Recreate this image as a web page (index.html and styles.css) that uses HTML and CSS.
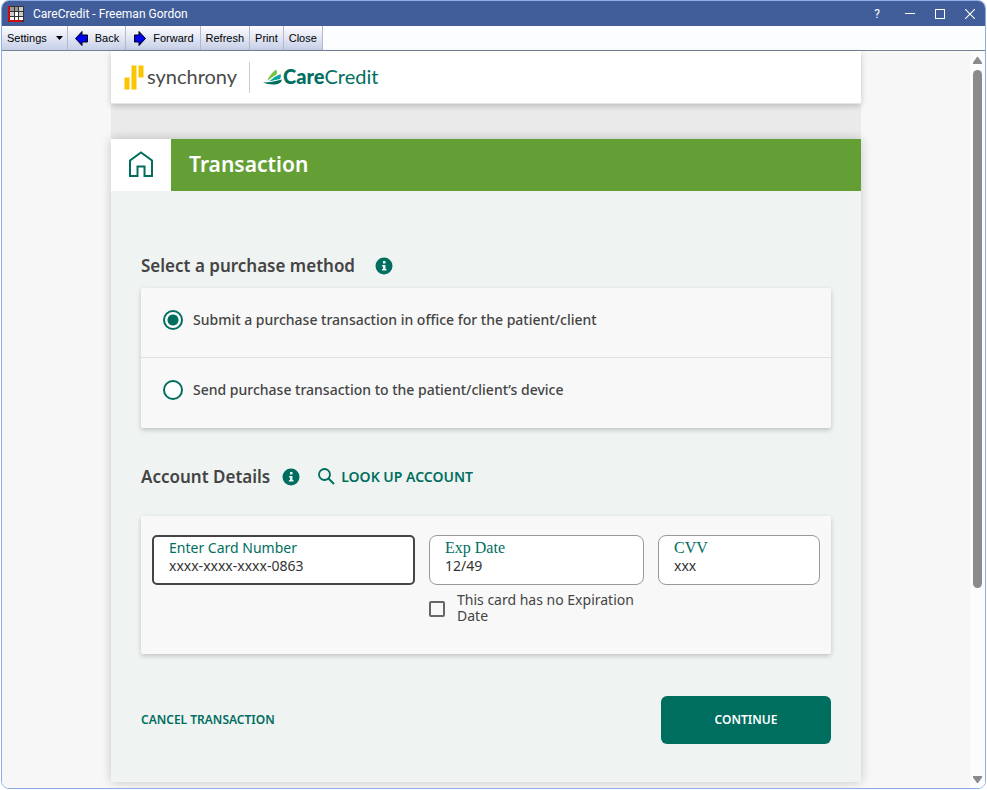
FILE: index.html
```html
<!DOCTYPE html>
<html lang="en">
    <head>
        <meta charset="utf-8">
        <title>CareCredit - Freeman Gordon</title>
        <link rel="stylesheet" href="styles.css">
    </head>
    <body>
        <div class="window">
            <div class="titlebar">
                <svg class="app-icon" width="16" height="16" viewBox="0 0 16 16">
                    <rect width="16" height="16" fill="#333"/>
                    <path d="M2 1h4v4h-4zM7 1h3v4h-3z" fill="#999"/>
                    <path d="M11 1h4v4h-4zM2 6h4v4h-4zM11 6h4v4h-4z" fill="#ccc"/>
                    <path d="M7 6h3v4h-3zM2 11h4v3h-4zM7 11h3v3h-3zM11 11h4v3h-4z" fill="#fff"/>
                    <path d="M1 0v15H14" fill="none" stroke="#f00" stroke-width="1.500"/>
                </svg>
                <span class="caption">CareCredit - Freeman Gordon</span>
                <button class="winbtn help" aria-label="Help">?</button>
                <button class="winbtn" aria-label="Minimize">
                    <svg width="10" height="10" viewBox="0 0 10 10"><path d="M0 4.500H10" stroke="#fff"/></svg>
                </button>
                <button class="winbtn" aria-label="Maximize">
                    <svg width="10" height="10" viewBox="0 0 10 10"><rect x="0.500" y="0.500" width="9" height="9" fill="none" stroke="#fff"/></svg>
                </button>
                <button class="winbtn" aria-label="Close window">
                    <svg width="10" height="10" viewBox="0 0 10 10"><path d="M0 0L10 10M10 0L0 10" stroke="#fff" stroke-width="1.100"/></svg>
                </button>
            </div>
            <div class="toolbar">
                <button class="tool">Settings
                    <svg class="caret" width="7" height="4" viewBox="0 0 7 4"><path d="M0 0H7L3.500 4z"/></svg>
                </button>
                <button class="tool tool-icon">
                    <svg width="14" height="15" viewBox="0 0 14 15"><path d="M7 0.500V4H12.500V11H7V14.500L0.500 7.500z" fill="#0000f0" stroke="#000"/></svg>
                    Back
                </button>
                <button class="tool tool-icon">
                    <svg width="14" height="15" viewBox="0 0 14 15"><path d="M6 0.500V4H1.500V11H6V14.500L12.500 7.500z" fill="#0000f0" stroke="#000"/></svg>
                    Forward
                </button>
                <button class="tool">Refresh</button>
                <button class="tool">Print</button>
                <button class="tool">Close</button>
            </div>
            <div class="view">
                <div class="page">
                    <header class="brand">
                        <svg width="20" height="25" viewBox="0 0 20 25">
                            <path d="M0.500 12.500h5v12h-5zM7.500 0.500h5v24h-5zM14.500 0.500h5v12h-5z" fill="#fbc600"/>
                        </svg>
                        <span class="synchrony">synchrony</span>
                        <span class="divider"></span>
                        <svg width="20" height="17" viewBox="0 0 20 17">
                            <path d="M4 12Q7 5 13 0.500Q15 3 13.500 5.500Q9 8 4 12z" fill="#7ac143"/>
                            <path d="M6 12.500Q11 7.500 17.500 5Q18.500 8 17 10Q11 11 6 12.500z" fill="#00a79d"/>
                            <path d="M0 13.500Q9 13.500 19 10.500Q18 15 12 15.500Q5 16 0 13.500z" fill="#006e5f"/>
                        </svg>
                        <span class="care"><b>Care</b>Credit</span>
                    </header>
                    <main class="sheet">
                        <div class="heading">
                            <a href="#" class="home" aria-label="Home">
                                <svg width="26" height="26" viewBox="0 0 26 26"><path d="M2 25V9.500L13 1.500L24 9.500V25H16.500V15.500H9.500V25z" fill="none" stroke="#006e5f" stroke-width="2"/></svg>
                            </a>
                            <h1>Transaction</h1>
                        </div>
                        <form class="body">
                            <div class="section">
                                <h2>Select a purchase method</h2>
                                <svg class="info info-wide" width="18" height="18" viewBox="0 0 18 18"><circle cx="9" cy="9" r="8.500" fill="#006e5f"/><path d="M8 4h2.500v2.500h-2.500zM7 8h3.500v4h1v1.500h-4.500v-1.500h1v-2.500h-1z" fill="#e8f3f0"/></svg>
                            </div>
                            <div class="card">
                                <label class="option"><input type="radio" name="method" checked><span>Submit a purchase transaction in office for the patient/client</span></label>
                                <label class="option"><input type="radio" name="method"><span>Send purchase transaction to the patient/client’s device</span></label>
                            </div>
                            <div class="section section-account">
                                <h2>Account Details</h2>
                                <svg class="info" width="18" height="18" viewBox="0 0 18 18"><circle cx="9" cy="9" r="8.500" fill="#006e5f"/><path d="M8 4h2.500v2.500h-2.500zM7 8h3.500v4h1v1.500h-4.500v-1.500h1v-2.500h-1z" fill="#e8f3f0"/></svg>
                                <a href="#" class="lookup">
                                    <svg width="17" height="17" viewBox="0 0 17 17"><circle cx="6.500" cy="6.500" r="5.500" fill="none" stroke="#006e5f" stroke-width="1.800"/><path d="M10.500 10.500L16 16" stroke="#006e5f" stroke-width="2"/></svg>
                                    LOOK UP ACCOUNT
                                </a>
                            </div>
                            <div class="card details">
                                <div class="field focused">
                                    <label for="card">Enter Card Number</label>
                                    <input type="text" id="card" value="xxxx-xxxx-xxxx-0863">
                                </div>
                                <div>
                                    <div class="field serif">
                                        <label for="exp">Exp Date</label>
                                        <input type="text" id="exp" value="12/49">
                                    </div>
                                    <label class="noexp"><input type="checkbox"><span>This card has no Expiration Date</span></label>
                                </div>
                                <div class="field serif">
                                    <label for="cvv">CVV</label>
                                    <input type="text" id="cvv" value="xxx">
                                </div>
                            </div>
                            <div class="actions">
                                <a href="#" class="cancel">CANCEL TRANSACTION</a>
                                <button type="button" class="continue">CONTINUE</button>
                            </div>
                        </form>
                    </main>
                </div>
                <div class="scrollbar">
                    <svg width="9" height="7" viewBox="0 0 9 7"><path d="M4 0h1L9 5.500V7H0V5.500z" fill="#8b8b8b"/></svg>
                    <div class="track"><div class="thumb"></div></div>
                    <svg width="9" height="7" viewBox="0 0 9 7"><path d="M4 7h1L9 1.500V0H0V1.500z" fill="#8b8b8b"/></svg>
                </div>
            </div>
        </div>
    </body>
</html>
```
FILE: styles.css
```css
*{box-sizing: border-box;}
body{margin: 0; background-color: #fff; color: #444; font-family: "Noto Sans", sans-serif;}
h1, h2{margin: 0; font-weight: 600;}
a{color: #006e5f; text-decoration: none;}
button{font-family: inherit; border: 0; padding: 0;}
svg{display: block; flex: none;}

.window{height: calc(100vh - 1px); margin: 0 1px; border: 1px solid #8fade6; border-radius: 8px; overflow: hidden; display: flex; flex-direction: column;}
.titlebar{height: 25px; flex: none; display: flex; align-items: center; padding-left: 6px; background-color: #425e9a; color: #fff;}
.caption{flex: 1; margin-left: 9px; font-family: Roboto, sans-serif; font-size: 12px;}
.winbtn{width: 30px; height: 24px; background: none; color: #fff; display: flex; align-items: center; justify-content: center; font-family: Roboto, sans-serif; font-size: 12px;}
.help{width: 36px;}
.toolbar{height: 25px; flex: none; display: flex; background-color: #fcfdff; border-bottom: 1px solid #748296;}
.tool{height: 24px; display: flex; align-items: center; padding: 0 4px 0 5px; border-right: 1px solid #b4bac8; background: linear-gradient(#fdfdff, #c6cfe8); color: #000; font-family: "Liberation Sans", Arial, sans-serif; font-size: 11px;}
.tool + .tool{padding: 0 5px;}
.tool + .tool-icon{gap: 6px; padding: 0 6px 0 7px;}
.caret{margin-left: 9px;}

.view{flex: 1; min-height: 0; display: flex; background-color: #f7f7f7;}
.page{width: 100%; max-width: 750px; margin: 0 auto; display: flex; flex-direction: column; background: linear-gradient(#eaeaea 140px, #f7f7f7 140px);}
.brand{height: 53px; flex: none; display: flex; align-items: center; padding-left: 13px; background-color: #fff; box-shadow: inset 0 -1px 0 #e4e4e4, 0 2px 6px rgba(0,0,0,0.2);}
.synchrony, .care{font-family: Lato, sans-serif; font-size: 20px; line-height: 24px; padding-bottom: 4px;}
.synchrony{margin-left: 3px; color: #4b4b4b;}
.divider{width: 1px; height: 31px; margin: 0 13px 0 12px; background-color: #ccc;}
.care{color: #006e5f;}
.care b{font-weight: 900;}

.sheet{margin-top: 35px; background-color: #eff3f2; box-shadow: 0 0 10px rgba(0,0,0,0.2);}
.heading{display: flex; height: 52px; background-color: #649f36;}
.home{width: 60px; display: flex; align-items: center; justify-content: center; padding-bottom: 2px; background-color: #fff;}
h1{padding-left: 18px; font-size: 21px; line-height: 50px; color: #fff;}
.body{padding: 60px 30px 38px;}
.section{display: flex; align-items: center; height: 30px;}
.section-account{margin-top: 34px;}
h2{font-size: 17px; line-height: 30px;}
.info{margin-left: 12px;}
.info-wide{margin-left: 20px;}
.lookup{display: flex; align-items: center; gap: 6px; margin-left: 18px; padding-bottom: 2px; font-size: 14px; font-weight: 600;}
.card{margin-top: 7px; background-color: #f8f8f8; border-radius: 2px; box-shadow: 0 2px 5px rgba(0,0,0,0.2);}
.option{display: flex; align-items: center; height: 70px; padding: 0 22px 6px; font-size: 14px; font-weight: 500;}
.option:first-child{border-bottom: 1px solid #e0e0e0; padding-bottom: 5px;}
.option span{padding-bottom: 2px;}
.option input{appearance: none; flex: none; width: 20px; height: 20px; margin: 0 10px 0 0; border: 2px solid #006e5f; border-radius: 50%; background-color: #fff;}
.option input:checked{background: radial-gradient(circle, #006e5f 5px, #fff 6px);}
.details{display: grid; grid-template-columns: 263fr 215fr 162fr; gap: 14px; align-items: start; margin-top: 24px; padding: 19px 11px 30px;}
.field{height: 50px; padding: 2px 15px; border: 1px solid #999; border-radius: 8px; background-color: #fff;}
.focused{border: 2px solid #444; border-radius: 5px; padding: 1px 15px;}
.field label{display: block; font-size: 14px; line-height: 20px; color: #006e5f;}
.field.serif label{font-family: "Liberation Serif", serif; font-size: 16px;}
.field input{display: block; width: 100%; height: 16px; padding: 0; border: 0; outline: 0; background: none; color: #333; font-family: inherit; font-size: 14px; line-height: 16px;}
.noexp{display: flex; align-items: center; gap: 12px; margin-top: 7px; font-size: 14px; line-height: 16px;}
.noexp input{appearance: none; flex: none; width: 16px; height: 16px; margin: 2px 0 0 0; border: 2px solid #666; border-radius: 2px;}
.actions{display: flex; align-items: center; justify-content: space-between; margin-top: 42px;}
.cancel{padding-bottom: 2px; font-size: 12px; font-weight: 600;}
.continue{width: 170px; height: 48px; padding-bottom: 2px; border-radius: 6px; background-color: #006e5f; color: #fff; font-size: 12px; font-weight: 600;}

.scrollbar{width: 15px; flex: none; display: flex; flex-direction: column; align-items: center; padding: 6px 0 5px; background-color: #fcfcfc;}
.track{flex: 1; width: 9px; margin: 6px 0;}
.thumb{height: 74%; border-radius: 5px; background-color: #8b8b8b;}
```
